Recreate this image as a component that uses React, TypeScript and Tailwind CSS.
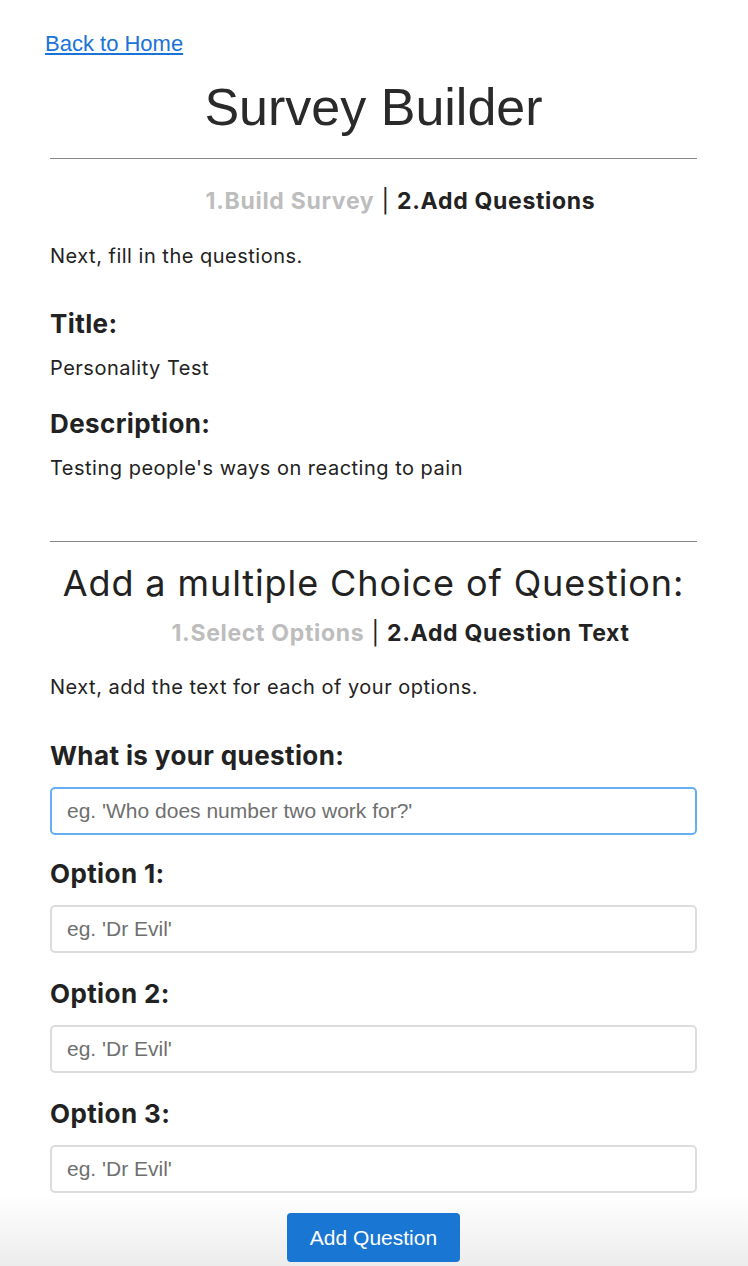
const sf = "font-['Inter','Noto_Sans',sans-serif]";
const hv = "font-['Liberation_Sans',Arial,sans-serif]";

function Stepper({ done, current }: { done: string; current: string }) {
  return (
    <p className={`${sf} pl-[54px] text-center text-[23px] leading-[28px] font-bold tracking-[0.03em] text-[#222]`}>
      <span className="text-[#bdbdbd]">{done}</span>
      <span className="font-normal"> | </span>
      <span>{current}</span>
    </p>
  );
}

function Field({ label, placeholder, focused, gap }: { label: string; placeholder: string; focused?: boolean; gap: string }) {
  return (
    <div className={gap}>
      <h4 className={`${sf} text-[26px] leading-[32px] font-bold tracking-[0.015em] text-[#222]`}>{label}</h4>
      <input
        placeholder={placeholder}
        className={`${hv} mt-[15px] block w-full h-[48px] rounded-[5px] border-2 bg-white px-[15px] text-[21px] text-[#333] placeholder:text-[#6f6f6f] outline-none ${
          focused ? 'border-[#63aef5]' : 'border-[#dcdcdc]'
        }`}
      />
    </div>
  );
}

export default function App() {
  return (
    <div className="min-h-[1266px] bg-[linear-gradient(to_bottom,#ffffff_1195px,#ececec_1266px)]">
      <div className="w-[647px] ml-[50px] pt-[32px]">
        <a href="#" className={`${hv} -ml-[5px] block w-fit text-[22px] leading-[24px] text-[#1a73d8] underline`}>
          Back to Home
        </a>

        <h1 className={`${hv} mt-[23px] text-center text-[52px] leading-[56px] text-[#2a2a2a]`}>Survey Builder</h1>

        <hr className="mt-[23px] border-0 border-t border-[#888]" />

        <div className="mt-[28px]">
          <Stepper done="1.Build Survey" current="2.Add Questions" />
        </div>

        <p className={`${sf} mt-[28px] text-[20px] leading-[26px] tracking-[0.025em] text-[#222]`}>Next, fill in the questions.</p>

        <h4 className={`${sf} mt-[40px] text-[26px] leading-[30px] font-bold tracking-[0.015em] text-[#222]`}>Title:</h4>
        <p className={`${sf} mt-[16px] text-[20px] leading-[26px] tracking-[0.025em] text-[#222]`}>Personality Test</p>

        <h4 className={`${sf} mt-[28px] text-[26px] leading-[30px] font-bold tracking-[0.015em] text-[#222]`}>Description:</h4>
        <p className={`${sf} mt-[16px] text-[20px] leading-[26px] tracking-[0.025em] text-[#222]`}>Testing people's ways on reacting to pain</p>

        <hr className="mt-[60px] border-0 border-t border-[#888]" />

        <h2 className={`${sf} mt-[19px] text-center text-[36px] leading-[44px] tracking-[0.025em] text-[#222]`}>
          Add a multiple Choice of Question:
        </h2>

        <div className="mt-[14px]">
          <Stepper done="1.Select Options" current="2.Add Question Text" />
        </div>

        <p className={`${sf} mt-[27px] text-[20px] leading-[26px] tracking-[0.025em] text-[#222]`}>Next, add the text for each of your options.</p>

        <Field gap="mt-[40px]" focused label="What is your question:" placeholder="eg. 'Who does number two work for?'" />
        <Field gap="mt-[23px]" label="Option 1:" placeholder="eg. 'Dr Evil'" />
        <Field gap="mt-[25px]" label="Option 2:" placeholder="eg. 'Dr Evil'" />
        <Field gap="mt-[25px]" label="Option 3:" placeholder="eg. 'Dr Evil'" />

        <div className="mt-[20px] flex justify-center">
          <button className={`${hv} w-[173px] h-[49px] rounded-[4px] bg-[#1976d2] text-[21px] text-white`}>
            Add Question
          </button>
        </div>
      </div>
    </div>
  );
}
